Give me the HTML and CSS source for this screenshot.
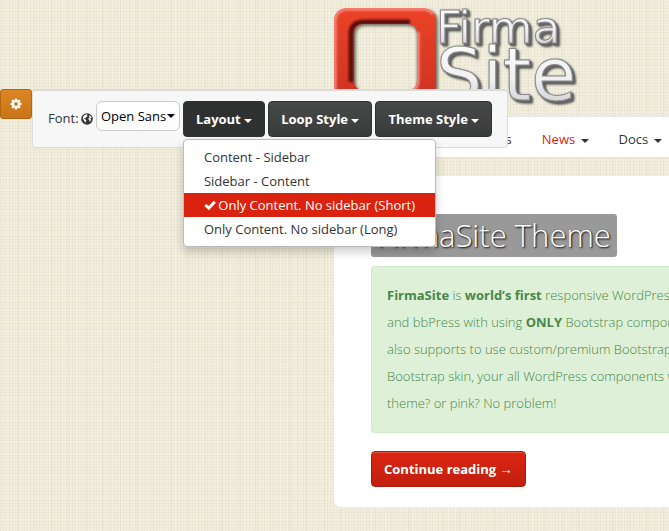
FILE: index.html
```html
<!DOCTYPE html>
<html lang="en">
<head>
<meta charset="utf-8">
<title>FirmaSite Theme</title>
<link rel="stylesheet" href="styles.css">
</head>
<body>
<div class="page">
  <header class="brand">
    <svg class="logo" viewBox="0 0 250 116" role="img" aria-label="Firma Site">
      <defs>
        <linearGradient id="red" x1="0" y1="0" x2="0" y2="1"><stop offset="0" stop-color="#ee4428"/><stop offset="1" stop-color="#c92f20"/></linearGradient>
        <linearGradient id="steel" x1="0" y1="0" x2="0" y2="1"><stop offset="0" stop-color="#ffffff"/><stop offset=".55" stop-color="#f0f0f1"/><stop offset="1" stop-color="#c4c4c6"/></linearGradient>
        <filter id="soft" x="-20%" y="-20%" width="140%" height="140%"><feGaussianBlur stdDeviation="1.5"/></filter>
        <filter id="edge" x="-20%" y="-20%" width="140%" height="140%"><feGaussianBlur stdDeviation="1"/></filter>
        <clipPath id="frame"><path clip-rule="evenodd" d="M14 8H87Q102 8 102 22V116H0V22Q0 8 14 8ZM30 24Q20 24 20 33V81Q20 90 30 90H73Q83 90 83 81V33Q83 24 73 24Z"/></clipPath>
      </defs>
      <path d="M16 10H91Q104 10 104 22V116H3V22Q3 10 16 10ZM32 26Q22 26 22 35V83Q22 92 32 92H73Q83 92 83 83V35Q83 26 73 26Z" fill="#433b33" opacity=".7" fill-rule="evenodd" filter="url(#soft)"/>
      <g clip-path="url(#frame)">
        <rect width="102" height="116" fill="url(#red)"/>
        <path d="M1 116V22Q1 9 14 9H87Q96 9 99 14" fill="none" stroke="#f58d82" stroke-width="3" filter="url(#edge)"/>
        <path d="M101 18V116" fill="none" stroke="#6e0d08" stroke-width="5" filter="url(#edge)"/>
        <path d="M17 82V34Q17 22 30 22H76" fill="none" stroke="#5c0e07" stroke-width="5" filter="url(#edge)"/>
        <path d="M84 32V80Q84 91 73 91H26" fill="none" stroke="#f59186" stroke-width="3" filter="url(#edge)"/>
      </g>
      <g class="wordmark">
        <text class="firma" x="102" y="43">Firma</text>
        <text class="site" x="102" y="100">Site</text>
      </g>
    </svg>
  </header>
  <nav class="nav" aria-label="Main">
    <a href="#">Home</a>
    <a href="#">Forums</a>
    <a href="#" class="current">News <span class="caret"></span></a>
    <a href="#">Docs <span class="caret"></span></a>
  </nav>
  <main class="panel">
    <h1>FirmaSite Theme</h1>
    <div class="well">
      <p><strong>FirmaSite</strong> is <strong>world’s first</strong> responsive WordPress<br>
      and bbPress with using <strong>ONLY</strong> Bootstrap components<br>
      also supports to use custom/premium Bootstrap<br>
      Bootstrap skin, your all WordPress components will<br>
      theme? or pink? No problem!</p>
    </div>
    <a class="more" href="#">Continue reading →</a>
  </main>
</div>

<aside class="customizer">
  <button class="gear" type="button" aria-label="Settings">
    <svg viewBox="0 0 12 12" width="12" height="12"><path fill="#fff" fill-rule="evenodd" d="M5 0.5H7L7.3 2L8.1 2.3L9.4 1.5L10.6 2.7L9.8 4L10.1 4.8L11.5 5V7L10.1 7.3L9.8 8.1L10.6 9.4L9.4 10.6L8.1 9.8L7.3 10.1L7 11.5H5L4.7 10.1L3.9 9.8L2.6 10.6L1.4 9.4L2.2 8.1L1.9 7.3L.5 7V5L1.9 4.8L2.2 4L1.4 2.7L2.6 1.5L3.9 2.3L4.7 2ZM6 4.1A1.9 1.9 0 1 0 6 7.9A1.9 1.9 0 0 0 6 4.1Z"/></svg>
  </button>
  <div class="tools">
    <label class="font-label" for="font">Font:
      <svg viewBox="0 0 12 12" width="12" height="12" aria-hidden="true"><circle cx="6" cy="6" r="5.8" fill="#333"/><path fill="#f7f7f7" d="M5.2 1.2L6.6 1.5L6 2.6L6.5 3.4L5.2 4L4.6 5.2L3.4 5L3.2 5.8L4.4 6.5L5.4 7.3L4.8 8.6L4.1 10L3.5 8.2L2.2 6.5L1.8 4.6L3 2.6ZM8.4 2L10 3.4L10.6 5L9.8 5L9.2 5.8L10.2 6.6L9.4 8.2L8.6 8.8L8.3 7.1L7.4 6.2L7.6 5L8.8 4.2L8 3.2Z"/></svg>
    </label>
    <span class="select-box"><select id="font"><option>Open Sans</option></select></span>
    <div class="dropdown">
      <button class="dark open" type="button" aria-expanded="true">Layout <span class="caret"></span></button>
      <ul class="menu">
        <li><a href="#">Content - Sidebar</a></li>
        <li><a href="#">Sidebar - Content</a></li>
        <li><a href="#" class="active"><svg viewBox="0 0 12 12" width="12" height="12" aria-hidden="true"><path d="M1.3 6L4.8 9.2L10.8 2.8" fill="none" stroke="#fff" stroke-width="3"/></svg> Only Content. No sidebar (Short)</a></li>
        <li><a href="#">Only Content. No sidebar (Long)</a></li>
      </ul>
    </div>
    <button class="dark" type="button">Loop Style <span class="caret"></span></button>
    <button class="dark" type="button">Theme Style <span class="caret"></span></button>
  </div>
</aside>
</body>
</html>
```
FILE: styles.css
```css
* { box-sizing: border-box; }

body {
  margin: 0;
  min-height: 100vh;
  overflow: hidden;
  font: 13px/20px "Open Sans", sans-serif;
  color: #333;
  background-color: #f2eedd;
  background-image:
    repeating-linear-gradient(90deg, rgba(150, 135, 90, .06) 0 1px, transparent 1px 3px),
    repeating-linear-gradient(0deg, rgba(150, 135, 90, .05) 0 1px, transparent 1px 3px),
    repeating-linear-gradient(90deg, rgba(255, 255, 255, .2) 0 1px, transparent 1px 7px),
    repeating-linear-gradient(0deg, rgba(255, 255, 255, .2) 0 1px, transparent 1px 11px),
    repeating-linear-gradient(90deg, rgba(150, 135, 90, .04) 0 2px, transparent 2px 17px);
}

a { color: inherit; text-decoration: none; }
button, select { font: inherit; }

.page { margin-left: 334px; }

.brand { height: 116px; }
.logo { display: block; width: 250px; height: 116px; }
.wordmark {
  font-family: "DejaVu Sans", sans-serif;
  fill: url(#steel);
  stroke: #8c8c90;
  stroke-width: 1px;
  filter: drop-shadow(2px 2px 0 #666) drop-shadow(1px 1px 1px #444);
}
.firma { font-size: 45px; }
.site { font-size: 73px; }

.caret {
  display: inline-block;
  vertical-align: middle;
  border-top: 4px solid currentColor;
  border-right: 4px solid transparent;
  border-left: 4px solid transparent;
}

.nav {
  display: flex;
  height: 42px;
  padding-left: 49px;
  overflow: hidden;
  white-space: nowrap;
  background: #fff;
  border: 1px solid #e5e5e5;
  border-right: 0;
  border-radius: 4px 0 0 4px;
}
.nav a { padding: 12px 15px 8px; }
.nav .caret { margin-left: 2px; }
.nav .current { color: #d9230f; }
.nav .current .caret { color: #333; }

.panel {
  margin-top: 18px;
  padding: 38px 0 20px 37px;
  overflow: hidden;
  background: #fff;
  border-radius: 4px 0 0 6px;
}

h1 {
  width: fit-content;
  margin: 0 0 9px;
  padding: 4px 6px;
  font-size: 31px;
  font-weight: 300;
  line-height: 35px;
  color: #fff;
  text-shadow: 1px 1px 2px #000;
  background: #999;
  border-radius: 3px;
}

.well {
  margin-bottom: 18px;
  padding: 15px;
  color: #468847;
  white-space: nowrap;
  background: #dff0d8;
  border: 1px solid #d0e9c6;
  border-right: 0;
  border-radius: 4px 0 0 4px;
}
.well p { margin: 0; font-weight: 300; line-height: 27px; }
.well strong { font-weight: 700; }

.more {
  display: block;
  width: fit-content;
  padding: 7px 12px;
  font-weight: 700;
  color: #fff;
  background: linear-gradient(#dd2512, #c11f0e);
  border: 1px solid #a91b0c;
  border-radius: 4px;
  box-shadow: inset 0 1px 0 rgba(255, 255, 255, .2);
}

.customizer {
  position: absolute;
  top: 89px;
  left: 0;
  display: flex;
  align-items: flex-start;
}
.gear {
  display: grid;
  place-items: center;
  width: 32px;
  height: 30px;
  padding: 0;
  background: linear-gradient(#dc8523, #c87518);
  border: 1px solid #b4660f;
  border-radius: 3px;
}
.tools {
  display: flex;
  align-items: flex-start;
  gap: 3px;
  padding: 10px 15px;
  background: #f7f7f7;
  border: 1px solid #dcdcdc;
  border-top-width: 2px;
  border-radius: 4px;
}
.font-label { padding-top: 7px; }
.font-label svg { margin-left: -1px; vertical-align: -2px; }
.select-box { position: relative; display: block; }
.select-box::after {
  content: "";
  position: absolute;
  top: 13px;
  right: 5px;
  border-top: 4px solid #000;
  border-right: 4px solid transparent;
  border-left: 4px solid transparent;
  pointer-events: none;
}
select {
  display: block;
  width: 84px;
  height: 30px;
  padding: 0 4px;
  appearance: none;
  color: #000;
  background: #fff;
  border: 1px solid #ccc;
  border-radius: 6px;
}
.dark {
  display: block;
  height: 36px;
  padding: 0 12px;
  font-weight: 700;
  white-space: nowrap;
  color: #fff;
  background: linear-gradient(#474949, #3a3c3b);
  border: 1px solid #303231;
  border-radius: 4px;
}
.dark.open { background: #2f3131; }

.dropdown { position: relative; }
.menu {
  position: absolute;
  top: 38px;
  left: 0;
  margin: 0;
  padding: 5px 0;
  list-style: none;
  white-space: nowrap;
  background: #fff;
  border: 1px solid #bbb;
  border-radius: 4px;
  box-shadow: 0 5px 10px rgba(0, 0, 0, .2);
}
.menu a { display: block; padding: 2px 20px; }
.menu .active { color: #fff; background: #d9230f; }
.menu svg { margin-right: -1px; vertical-align: -1px; }
```
